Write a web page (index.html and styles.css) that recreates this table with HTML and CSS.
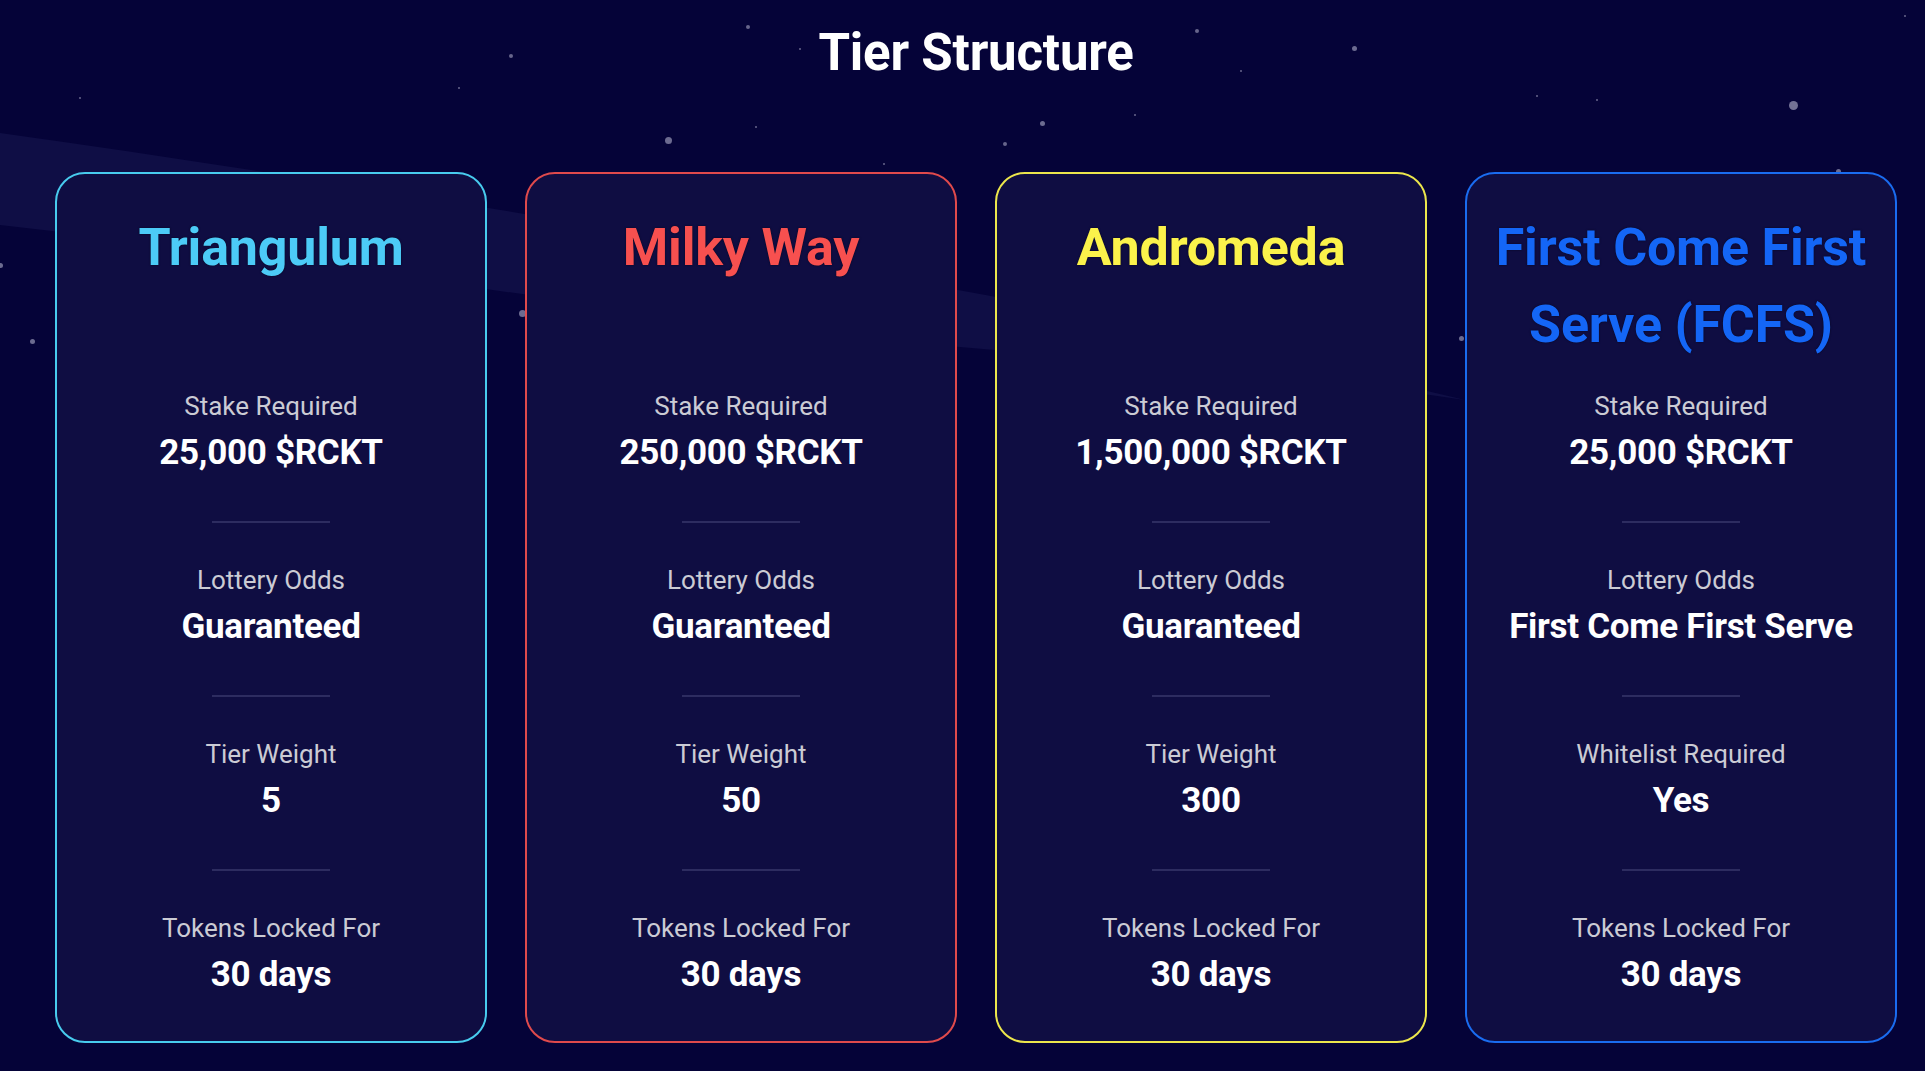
FILE: index.html
```html
<!DOCTYPE html>
<html lang="en">
<head>
<meta charset="utf-8">
<title>Tier Structure</title>
<link rel="stylesheet" href="styles.css">
</head>
<body>
<div class="sky" aria-hidden="true">
  <svg class="band" width="1925" height="1071" viewBox="0 0 1925 1071">
    <path d="M0 133 C 300 175, 600 225, 958 290 C 1150 325, 1320 365, 1465 400 C 1300 375, 1130 362, 960 347 C 620 315, 320 260, 0 225 Z" fill="#0f0e45"/>
  </svg>
  <span class="star s3" style="left:746px;top:25px"></span>
  <span class="star s3" style="left:509px;top:54px"></span>
  <span class="star s2" style="left:799px;top:48px"></span>
  <span class="star s3" style="left:1195px;top:29px"></span>
  <span class="star s4" style="left:1352px;top:46px"></span>
  <span class="star s2" style="left:1240px;top:70px"></span>
  <span class="star s2" style="left:79px;top:97px"></span>
  <span class="star s2" style="left:458px;top:87px"></span>
  <span class="star s2" style="left:1536px;top:95px"></span>
  <span class="star s2" style="left:1596px;top:99px"></span>
  <span class="star s6" style="left:1789px;top:101px"></span>
  <span class="star s4" style="left:1040px;top:121px"></span>
  <span class="star s2" style="left:1134px;top:114px"></span>
  <span class="star s2" style="left:755px;top:126px"></span>
  <span class="star s5" style="left:665px;top:137px"></span>
  <span class="star s3" style="left:1003px;top:142px"></span>
  <span class="star s2" style="left:883px;top:163px"></span>
  <span class="star s2" style="left:1904px;top:15px"></span>
  <span class="star s4" style="left:-2px;top:263px"></span>
  <span class="star s4" style="left:30px;top:339px"></span>
  <span class="star s5" style="left:519px;top:310px"></span>
  <span class="star s4" style="left:1459px;top:336px"></span>
  <span class="star s4" style="left:1836px;top:169px"></span>
</div>

<main class="page">
  <h1 class="heading">Tier Structure</h1>
  <section class="tiers">
    <article class="tier tier-cyan">
      <h2 class="tier-name">Triangulum</h2>
      <div class="stat"><p class="label">Stake Required</p><p class="value">25,000 $RCKT</p></div>
      <hr class="divider">
      <div class="stat"><p class="label">Lottery Odds</p><p class="value">Guaranteed</p></div>
      <hr class="divider">
      <div class="stat"><p class="label">Tier Weight</p><p class="value">5</p></div>
      <hr class="divider">
      <div class="stat"><p class="label">Tokens Locked For</p><p class="value">30 days</p></div>
    </article>
    <article class="tier tier-red">
      <h2 class="tier-name">Milky Way</h2>
      <div class="stat"><p class="label">Stake Required</p><p class="value">250,000 $RCKT</p></div>
      <hr class="divider">
      <div class="stat"><p class="label">Lottery Odds</p><p class="value">Guaranteed</p></div>
      <hr class="divider">
      <div class="stat"><p class="label">Tier Weight</p><p class="value">50</p></div>
      <hr class="divider">
      <div class="stat"><p class="label">Tokens Locked For</p><p class="value">30 days</p></div>
    </article>
    <article class="tier tier-yellow">
      <h2 class="tier-name">Andromeda</h2>
      <div class="stat"><p class="label">Stake Required</p><p class="value">1,500,000 $RCKT</p></div>
      <hr class="divider">
      <div class="stat"><p class="label">Lottery Odds</p><p class="value">Guaranteed</p></div>
      <hr class="divider">
      <div class="stat"><p class="label">Tier Weight</p><p class="value">300</p></div>
      <hr class="divider">
      <div class="stat"><p class="label">Tokens Locked For</p><p class="value">30 days</p></div>
    </article>
    <article class="tier tier-blue">
      <h2 class="tier-name">First Come First Serve (FCFS)</h2>
      <div class="stat"><p class="label">Stake Required</p><p class="value">25,000 $RCKT</p></div>
      <hr class="divider">
      <div class="stat"><p class="label">Lottery Odds</p><p class="value">First Come First Serve</p></div>
      <hr class="divider">
      <div class="stat"><p class="label">Whitelist Required</p><p class="value">Yes</p></div>
      <hr class="divider">
      <div class="stat"><p class="label">Tokens Locked For</p><p class="value">30 days</p></div>
    </article>
  </section>
</main>
</body>
</html>
```
FILE: styles.css
```css
* { box-sizing: border-box; }

html, body {
  margin: 0;
  padding: 0;
  width: 100%;
  height: 100%;
  overflow: hidden;
}

body {
  background: #050338;
  font-family: Roboto, "Liberation Sans", Arial, sans-serif;
  color: #ffffff;
  position: relative;
}

.sky {
  position: absolute;
  inset: 0;
  pointer-events: none;
  z-index: 0;
}

.band {
  position: absolute;
  left: 0;
  top: 0;
}

.star {
  position: absolute;
  border-radius: 50%;
  background: #7f7ea0;
}
.s2 { width: 2px; height: 2px; opacity: 0.8; }
.s3 { width: 4px; height: 4px; opacity: 0.8; }
.s4 { width: 5px; height: 5px; opacity: 0.85; }
.s5 { width: 7px; height: 7px; opacity: 0.85; }
.s6 { width: 9px; height: 9px; opacity: 0.9; }

.page {
  position: relative;
  z-index: 1;
  padding: 27px 28px 0 55px;
}

.heading {
  margin: 0;
  text-align: center;
  font-size: 51px;
  line-height: 52px;
  font-weight: 700;
  color: #ffffff;
  letter-spacing: -0.2px;
}

.tiers {
  margin-top: 93px;
  display: grid;
  grid-template-columns: repeat(4, 432px);
  column-gap: 38px;
}

.tier {
  height: 871px;
  border: 2px solid;
  border-radius: 30px;
  background: #0f0d42;
  padding: 35px 18px 42px;
  display: flex;
  flex-direction: column;
  align-items: center;
  text-align: center;
}

.tier-name {
  margin: 0 0 25px;
  height: 154px;
  font-size: 52px;
  line-height: 77px;
  font-weight: 700;
  letter-spacing: -0.2px;
  text-shadow: 0 0 2px rgba(0, 0, 0, 0.6);
}

.tier-cyan { border-color: #48cbee; }
.tier-cyan .tier-name { color: #4ccbf7; }
.tier-red { border-color: #e04a4c; }
.tier-red .tier-name { color: #f7504f; }
.tier-yellow { border-color: #ece64c; }
.tier-yellow .tier-name { color: #fbf24b; }
.tier-blue { border-color: #1a6cf0; }
.tier-blue .tier-name { color: #1466f6; }

.stat {
  display: flex;
  flex-direction: column;
  align-items: center;
  gap: 5px;
}

.label {
  margin: 0;
  font-size: 26px;
  line-height: 36px;
  font-weight: 400;
  color: #cbcbd4;
  white-space: nowrap;
}

.value {
  margin: 0;
  font-size: 35px;
  line-height: 48px;
  font-weight: 700;
  color: #ffffff;
  letter-spacing: -0.3px;
  white-space: nowrap;
}

.divider {
  width: 118px;
  height: 2px;
  margin: 44px 0 39px;
  border: 0;
  background: #2d2c60;
  flex-shrink: 0;
}
```
